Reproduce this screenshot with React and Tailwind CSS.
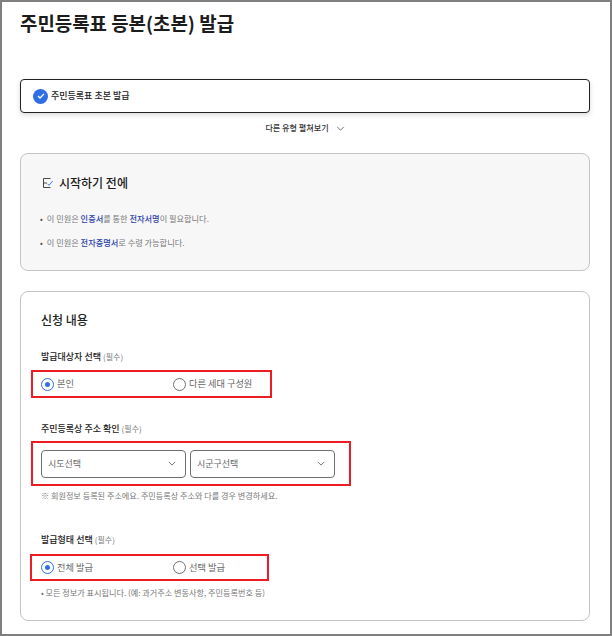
import React from 'react'

function Chevron({ className }) {
	return (
		<svg viewBox="0 0 10 6" fill="none" stroke="currentColor" strokeWidth="1" className={className}>
			<path d="M1 1l4 4 4-4" />
		</svg>
	)
}

function Radio({ checked, label }) {
	return (
		<label className="flex w-[132px] shrink-0 items-center gap-[3px]">
			{checked ? (
				<span className="flex h-[13px] w-[13px] items-center justify-center rounded-full border border-[#2f6fe4]">
					<span className="h-[5px] w-[5px] rounded-full bg-[#2f6fe4]"></span>
				</span>
			) : (
				<span className="h-[13px] w-[13px] rounded-full border border-[#6f6f6f]"></span>
			)}
			<span className="text-[9.2px] leading-none whitespace-nowrap text-[#666]">{label}</span>
		</label>
	)
}

function Select({ label }) {
	return (
		<div className="flex h-[28px] w-[145px] items-center justify-between rounded-[4px] border border-[#6f6f6f] pl-[6px] pr-[9px]">
			<span className="text-[9px] text-[#666]">{label}</span>
			<Chevron className="h-[5px] w-[8px] text-[#555]" />
		</div>
	)
}

function FieldLabel({ children, className }) {
	return (
		<p className={`text-[9px] leading-[12px] font-medium text-[#222] ${className}`}>
			{children} <span className="text-[8px] font-normal text-[#777]">(필수)</span>
		</p>
	)
}

export default function App() {
	return (
		<div className="h-[636px] w-[612px] overflow-hidden border-2 border-[#7f7f7f] bg-white pl-[18px] font-['Noto_Sans_CJK_KR',sans-serif]">
			<h1 className="mt-[7px] text-[18.9px] leading-[28px] font-bold text-[#1c1c1c]">주민등록표 등본(초본) 발급</h1>

			<div className="mt-[42px] flex h-[34px] w-[570px] items-center gap-[3px] rounded-[4px] border border-[#222] pl-[12px] shadow-[0_2px_5px_rgba(0,0,0,0.15)]">
				<span className="flex h-[15px] w-[15px] items-center justify-center rounded-full bg-[#2f6fe4]">
					<svg viewBox="0 0 10 8" fill="none" stroke="white" strokeWidth="1.6" className="h-[6px] w-[8px]">
						<path d="M1 4l2.7 2.7L9 1.2" />
					</svg>
				</span>
				<span className="text-[9px] font-medium text-[#222]">주민등록표 초본 발급</span>
			</div>

			<div className="mt-[8px] flex h-[14px] w-[570px] items-center justify-center gap-[7px]">
				<span className="text-[8.1px] font-medium text-[#333]">다른 유형 펼쳐보기</span>
				<Chevron className="h-[5px] w-[9px] text-[#555]" />
			</div>

			<section className="mt-[18px] h-[118px] w-[570px] rounded-[8px] border border-[#c4c4c4] bg-[#f7f7f7] pl-[22px]">
				<div className="mt-[20px] flex items-center gap-[6px]">
					<svg viewBox="0 0 10 10" fill="none" stroke="#333" strokeWidth="0.9" className="h-[10px] w-[10px]">
						<path d="M7.5 0.5H0.5v9h7" />
						<path d="M0.5 5h3.5" />
						<path d="M4.6 5.8l1.4 1.5L9.7 3" stroke="#2f6fe4" />
					</svg>
					<h2 className="text-[12px] leading-[18px] font-medium text-[#1c1c1c]">시작하기 전에</h2>
				</div>
				<p className="-ml-[3px] mt-[20px] text-[8.2px] leading-[12px] text-[#777]">
					<span className="mr-[4px] text-[#555]">•</span>이 민원은 <b className="font-medium text-[#2a3fa8]">인증서</b>를 통한 <b className="font-medium text-[#2a3fa8]">전자서명</b>이 필요합니다.
				</p>
				<p className="-ml-[3px] mt-[12px] text-[8.2px] leading-[12px] text-[#777]">
					<span className="mr-[4px] text-[#555]">•</span>이 민원은 <b className="font-medium text-[#2a3fa8]">전자증명서</b>로 수령 가능합니다.
				</p>
			</section>

			<section className="mt-[20px] h-[330px] w-[570px] rounded-[8px] border border-[#c4c4c4] pl-[20px]">
				<h2 className="mt-[19px] text-[12px] leading-[18px] font-medium text-[#222]">신청 내용</h2>

				<FieldLabel className="mt-[22px]">발급대상자 선택</FieldLabel>
				<div className="mt-[7px] -ml-[10px] flex h-[28px] w-[241px] items-center border-2 border-[#ed1c24] pl-[8px]">
					<Radio checked label="본인" />
					<Radio label="다른 세대 구성원" />
				</div>

				<FieldLabel className="mt-[25px]">주민등록상 주소 확인</FieldLabel>
				<div className="mt-[6px] -ml-[10px] flex h-[45px] w-[320px] items-center gap-[4px] border-2 border-[#ed1c24] pl-[8px]">
					<Select label="시도선택" />
					<Select label="시군구선택" />
				</div>
				<p className="mt-[4px] text-[8.15px] leading-[12px] text-[#777]">※ 회원정보 등록된 주소에요. 주민등록상 주소와 다를 경우 변경하세요.</p>

				<FieldLabel className="mt-[32px]">발급형태 선택</FieldLabel>
				<div className="mt-[8px] -ml-[11px] flex h-[27px] w-[239px] items-center border-2 border-[#ed1c24] pl-[9px]">
					<Radio checked label="전체 발급" />
					<Radio label="선택 발급" />
				</div>
				<p className="mt-[6px] text-[8.15px] leading-[12px] text-[#777]">• 모든 정보가 표시됩니다. (예: 과거주소 변동사항, 주민등록번호 등)</p>
			</section>
		</div>
	)
}
